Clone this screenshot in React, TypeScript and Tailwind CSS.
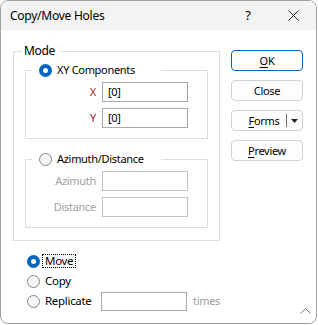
import React from 'react';

const FONT = { fontFamily: '"Noto Sans", "Liberation Sans", sans-serif' };

const Radio: React.FC<{ checked?: boolean }> = ({ checked }) =>
  checked ? (
    <span className="flex h-[13px] w-[13px] shrink-0 items-center justify-center rounded-full bg-[#0067c0]">
      <span className="h-[5px] w-[5px] rounded-full bg-white" />
    </span>
  ) : (
    <span className="h-[13px] w-[13px] shrink-0 rounded-full border border-[#858585] bg-[#f6f6f6]" />
  );

const Field: React.FC<{ value?: string; disabled?: boolean }> = ({ value, disabled }) => (
  <div
    className={`flex h-[20px] w-[86px] items-center border bg-white pl-[5px] ${
      disabled ? 'border-[#c2c2c2]' : 'border-[#a9a9a9]'
    }`}
  >
    {value}
  </div>
);

const Btn: React.FC<{ children: React.ReactNode; primary?: boolean }> = ({ children, primary }) => (
  <button
    className={`flex h-[21px] w-[72px] items-center justify-center rounded-[4px] border bg-[#fdfdfd] leading-none ${
      primary ? 'border-[#0067c0]' : 'border-[#d2d2d2]'
    }`}
  >
    {children}
  </button>
);

export default function App() {
  return (
    <div
      style={FONT}
      className="relative flex h-[324px] w-[317px] flex-col overflow-hidden rounded-[8px] border border-[#a0a0a0] bg-white text-[11px] tracking-[-0.3px] text-black"
    >
      {/* Title bar */}
      <div className="flex h-[29px] shrink-0 items-center bg-[#f3f3f3] pl-[9px]">
        <span className="flex-1 pt-[1px] text-[12px] tracking-[-0.25px]">Copy/Move Holes</span>
        <span className="flex w-[46px] justify-center text-[13px]">?</span>
        <span className="flex w-[45px] justify-center">
          <svg width="11" height="11" viewBox="0 0 11 11" fill="none" stroke="#222" strokeWidth="1">
            <path d="M0.5 0.5 L10.5 10.5 M10.5 0.5 L0.5 10.5" />
          </svg>
        </span>
      </div>

      {/* Body */}
      <div className="flex flex-1 flex-col pl-[12px] pt-[13px]">
        <div className="flex items-start gap-[11px]">
          <fieldset className="m-0 w-[207px] min-w-0 border border-[#dcdcdc] p-0">
            <legend className="ml-[8px] h-[16px] pl-[2px] pr-[5px] text-[12px] leading-[16px]">Mode</legend>
            <div className="px-[11px] pb-[12px] pt-[3px]">
              <fieldset className="m-0 min-w-0 border border-[#dcdcdc] p-0">
                <legend className="ml-[6px] flex h-[16px] w-[129px] items-center gap-[5px] pl-[7px]">
                  <Radio checked />
                  <span>XY Components</span>
                </legend>
                <div className="flex flex-col gap-[6px] pb-[10px] pr-[19px] pt-[4px]">
                  <div className="flex items-center justify-end gap-[6px]">
                    <span className="text-[#951b3c]">X</span>
                    <Field value="[0]" />
                  </div>
                  <div className="flex items-center justify-end gap-[6px]">
                    <span className="text-[#951b3c]">Y</span>
                    <Field value="[0]" />
                  </div>
                </div>
              </fieldset>

              <fieldset className="m-0 mt-[12px] min-w-0 border border-[#dcdcdc] p-0">
                <legend className="ml-[6px] flex h-[16px] w-[129px] items-center gap-[5px] pl-[7px]">
                  <Radio />
                  <span>Azimuth/Distance</span>
                </legend>
                <div className="flex flex-col gap-[6px] pb-[10px] pr-[19px] pt-[4px] text-[#a0a0a0]">
                  <div className="flex items-center justify-end gap-[6px]">
                    <span>Azimuth</span>
                    <Field disabled />
                  </div>
                  <div className="flex items-center justify-end gap-[6px]">
                    <span>Distance</span>
                    <Field disabled />
                  </div>
                </div>
              </fieldset>
            </div>
          </fieldset>

          <div className="mt-[7px] flex flex-col gap-[9px]">
            <Btn primary>
              <span className="underline underline-offset-2">O</span>K
            </Btn>
            <Btn>Close</Btn>
            <button className="flex h-[21px] w-[72px] items-center rounded-[4px] border border-[#d2d2d2] bg-[#fdfdfd] leading-none">
              <span className="flex-1 pl-[14px] pr-[4px] text-center">
                <span className="underline underline-offset-2">F</span>orms
              </span>
              <span className="h-[13px] w-px bg-[#6a6a6a]" />
              <span className="flex w-[15px] justify-center">
                <svg width="7" height="4" viewBox="0 0 7 4">
                  <path d="M0 0 H7 L3.5 4 Z" fill="#222" />
                </svg>
              </span>
            </button>
            <Btn>
              <span className="underline underline-offset-2">P</span>review
            </Btn>
          </div>
        </div>

        {/* Action radios */}
        <div className="mt-[10px] flex flex-col pl-[14px] text-[11.5px]">
          <div className="flex h-[20px] items-center gap-[2px]">
            <Radio checked />
            <span className="border border-dotted border-black px-[2px] leading-[12px]">Move</span>
          </div>
          <div className="flex h-[20px] items-center gap-[2px]">
            <Radio />
            <span className="border border-transparent px-[2px] leading-[12px]">Copy</span>
          </div>
          <div className="flex h-[20px] items-center gap-[2px]">
            <Radio />
            <span className="w-[57px] border border-transparent px-[2px] leading-[12px]">Replicate</span>
            <div className="flex h-[19px] w-[86px] border border-[#a9a9a9] bg-white" />
            <span className="ml-[4px] text-[11px] text-[#a0a0a0]">times</span>
          </div>
        </div>
      </div>

      {/* Size grip */}
      <svg
        className="absolute bottom-[9px] right-[5px]"
        width="11"
        height="6"
        viewBox="0 0 11 6"
        fill="none"
        stroke="#7a7a7a"
        strokeWidth="1"
      >
        <path d="M0.5 5.5 L5.5 0.5 L10.5 5.5" />
      </svg>
    </div>
  );
}
